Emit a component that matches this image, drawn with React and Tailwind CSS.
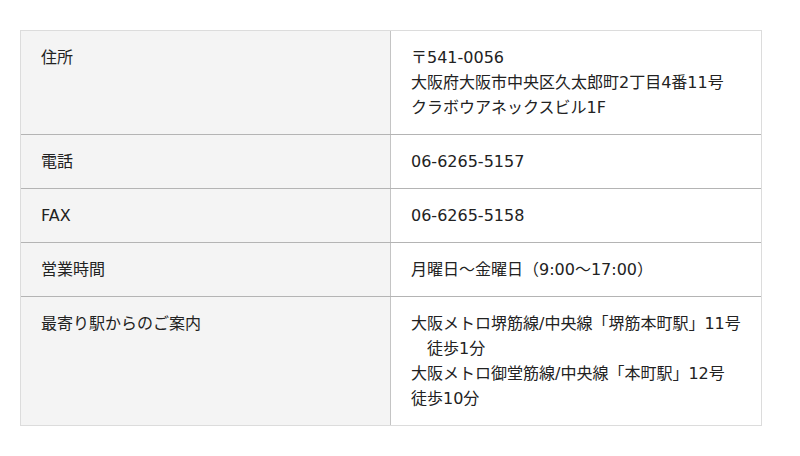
const rows = [
    { label: '住所', lines: ['〒541-0056', '大阪府大阪市中央区久太郎町2丁目4番11号', 'クラボウアネックスビル1F'] },
    { label: '電話', lines: ['06-6265-5157'] },
    { label: 'FAX', lines: ['06-6265-5158'] },
    { label: '営業時間', lines: ['月曜日〜金曜日（9:00〜17:00）'] },
    { label: '最寄り駅からのご案内', lines: ['大阪メトロ堺筋線/中央線「堺筋本町駅」11号', '　徒歩1分', '大阪メトロ御堂筋線/中央線「本町駅」12号', '徒歩10分'] },
];

export default function App() {
    return (
        <div className="w-[800px] h-[456px] bg-white pt-[30px] pl-[20px] text-[16px] leading-[25px] text-[#222]" style={{ fontFamily: '"DejaVu Sans", "Noto Sans CJK JP", sans-serif' }}>
            <div className="w-[742px] border border-[#dcdcdc]">
                {rows.map((row, i) => (
                    <div key={row.label} className={`flex ${i > 0 ? 'border-t border-[#b4b4b4]' : ''}`}>
                        <div className="w-[370px] bg-[#f4f4f4] border-r border-[#c4c4c4] px-[20px] py-[14px] shrink-0">
                            {row.label}
                        </div>
                        <div className="flex-1 px-[20px] py-[14px] whitespace-pre">
                            {row.lines.map((line, j) => (
                                <div key={j}>{line}</div>
                            ))}
                        </div>
                    </div>
                ))}
            </div>
        </div>
    );
}
